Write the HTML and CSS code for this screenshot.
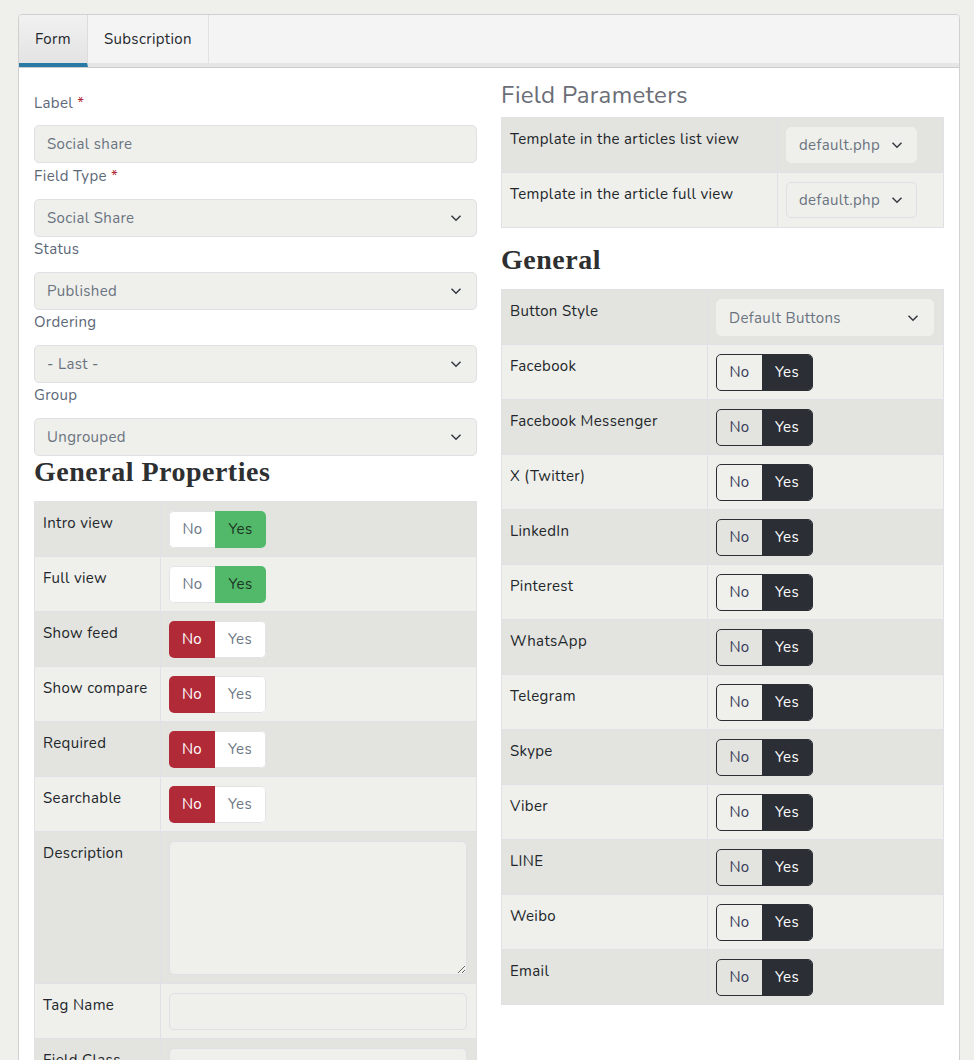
FILE: index.html
```html
<!DOCTYPE html>
<html lang="en">

<head>
  <meta charset="UTF-8">
  <meta name="viewport" content="width=device-width, initial-scale=1.0">
  <title>Edit Field</title>
  <link rel="stylesheet" href="styles.css">
</head>

<body>
  <div class="card">
    <div class="tabs">
      <a class="tab active" href="#form">Form</a>
      <a class="tab" href="#subscription">Subscription</a>
    </div>

    <div class="card-body">
      <!-- left column -->
      <div class="col">
        <div class="form-group">
          <label>Label <span class="star">*</span></label>
          <input class="form-control" type="text" placeholder="Social share">
        </div>
        <div class="form-group">
          <label>Field Type <span class="star">*</span></label>
          <div class="select-wrap">
            <select class="form-control"><option>Social Share</option></select>
            <svg class="chev" viewBox="0 0 16 16"><path d="M2 5l6 6 6-6"/></svg>
          </div>
        </div>
        <div class="form-group">
          <label>Status</label>
          <div class="select-wrap">
            <select class="form-control"><option>Published</option></select>
            <svg class="chev" viewBox="0 0 16 16"><path d="M2 5l6 6 6-6"/></svg>
          </div>
        </div>
        <div class="form-group">
          <label>Ordering</label>
          <div class="select-wrap">
            <select class="form-control"><option>- Last -</option></select>
            <svg class="chev" viewBox="0 0 16 16"><path d="M2 5l6 6 6-6"/></svg>
          </div>
        </div>
        <div class="form-group">
          <label>Group</label>
          <div class="select-wrap">
            <select class="form-control"><option>Ungrouped</option></select>
            <svg class="chev" viewBox="0 0 16 16"><path d="M2 5l6 6 6-6"/></svg>
          </div>
        </div>

        <h3 class="serif-title">General Properties</h3>
        <table class="params params-left">
          <tr>
            <td class="key">Intro view</td>
            <td><div class="switch"><span class="off">No</span><span class="yes-on">Yes</span></div></td>
          </tr>
          <tr>
            <td class="key">Full view</td>
            <td><div class="switch"><span class="off">No</span><span class="yes-on">Yes</span></div></td>
          </tr>
          <tr>
            <td class="key">Show feed</td>
            <td><div class="switch"><span class="no-on">No</span><span class="off">Yes</span></div></td>
          </tr>
          <tr>
            <td class="key">Show compare</td>
            <td><div class="switch"><span class="no-on">No</span><span class="off">Yes</span></div></td>
          </tr>
          <tr>
            <td class="key">Required</td>
            <td><div class="switch"><span class="no-on">No</span><span class="off">Yes</span></div></td>
          </tr>
          <tr>
            <td class="key">Searchable</td>
            <td><div class="switch"><span class="no-on">No</span><span class="off">Yes</span></div></td>
          </tr>
          <tr>
            <td class="key">Description</td>
            <td><textarea class="form-control area"></textarea></td>
          </tr>
          <tr>
            <td class="key">Tag Name</td>
            <td><input class="form-control" type="text"></td>
          </tr>
          <tr>
            <td class="key">Field Class</td>
            <td><input class="form-control" type="text"></td>
          </tr>
        </table>
      </div>

      <!-- right column -->
      <div class="col">
        <h3 class="light-title">Field Parameters</h3>
        <table class="params params-tpl">
          <tr>
            <td class="key">Template in the articles list view</td>
            <td>
              <div class="select-wrap small">
                <select class="form-control flat"><option>default.php</option></select>
                <svg class="chev" viewBox="0 0 16 16"><path d="M2 5l6 6 6-6"/></svg>
              </div>
            </td>
          </tr>
          <tr>
            <td class="key">Template in the article full view</td>
            <td>
              <div class="select-wrap small">
                <select class="form-control"><option>default.php</option></select>
                <svg class="chev" viewBox="0 0 16 16"><path d="M2 5l6 6 6-6"/></svg>
              </div>
            </td>
          </tr>
        </table>

        <h3 class="serif-title general">General</h3>
        <table class="params params-right">
          <tr>
            <td class="key">Button Style</td>
            <td>
              <div class="select-wrap wide">
                <select class="form-control flat"><option>Default Buttons</option></select>
                <svg class="chev" viewBox="0 0 16 16"><path d="M2 5l6 6 6-6"/></svg>
              </div>
            </td>
          </tr>
          <tr><td class="key">Facebook</td><td><div class="switch dark"><span>No</span><span class="on">Yes</span></div></td></tr>
          <tr><td class="key">Facebook Messenger</td><td><div class="switch dark"><span>No</span><span class="on">Yes</span></div></td></tr>
          <tr><td class="key">X (Twitter)</td><td><div class="switch dark"><span>No</span><span class="on">Yes</span></div></td></tr>
          <tr><td class="key">LinkedIn</td><td><div class="switch dark"><span>No</span><span class="on">Yes</span></div></td></tr>
          <tr><td class="key">Pinterest</td><td><div class="switch dark"><span>No</span><span class="on">Yes</span></div></td></tr>
          <tr><td class="key">WhatsApp</td><td><div class="switch dark"><span>No</span><span class="on">Yes</span></div></td></tr>
          <tr><td class="key">Telegram</td><td><div class="switch dark"><span>No</span><span class="on">Yes</span></div></td></tr>
          <tr><td class="key">Skype</td><td><div class="switch dark"><span>No</span><span class="on">Yes</span></div></td></tr>
          <tr><td class="key">Viber</td><td><div class="switch dark"><span>No</span><span class="on">Yes</span></div></td></tr>
          <tr><td class="key">LINE</td><td><div class="switch dark"><span>No</span><span class="on">Yes</span></div></td></tr>
          <tr><td class="key">Weibo</td><td><div class="switch dark"><span>No</span><span class="on">Yes</span></div></td></tr>
          <tr><td class="key">Email</td><td><div class="switch dark"><span>No</span><span class="on">Yes</span></div></td></tr>
        </table>
      </div>
    </div>
  </div>
</body>

</html>
```

FILE: styles.css
```css
* {
  box-sizing: border-box;
}

body {
  margin: 0;
  padding: 14px 14px 0 18px;
  background: #eff0ec;
  font-family: "Nunito", "Lato", "Noto Sans", sans-serif;
  font-size: 15px;
  letter-spacing: 0.35px;
  color: #22262a;
}

.card {
  background: #ffffff;
  border: 1px solid #d0d0d0;
  border-radius: 4px 4px 0 0;
  min-height: 1100px;
}

/* tabs */
.tabs {
  display: flex;
  height: 52px;
  background: #f4f4f4;
  border-bottom: 4px solid #e6e6e6;
  box-shadow: 0 1px 0 #cccccc;
  border-radius: 4px 4px 0 0;
}

.tabs .tab {
  display: block;
  height: 52px;
  margin-bottom: -4px;
  padding: 0 16px;
  line-height: 49px;
  font-size: 15px;
  color: #24282d;
  text-decoration: none;
  border-right: 1px solid #e2e2e2;
  border-bottom: 4px solid transparent;
}

.tabs .tab.active {
  background: linear-gradient(#f1f1f1, #e3e3e3);
  border-right: 1px solid #dcdcdc;
  border-bottom-color: #2a7aa5;
  border-top-left-radius: 4px;
}

.card-body {
  display: grid;
  grid-template-columns: 1fr 1fr;
  column-gap: 24px;
  padding: 14px 15px 0;
}

.col {
  min-width: 0;
}

/* form */
.form-group label {
  display: block;
  line-height: 24px;
  margin-bottom: 11px;
  color: #5c6877;
}

.form-group:first-child {
  padding: 10px 0 1px;
}

.form-group:first-child label {
  margin-bottom: 10px;
}

.star {
  color: #b12a37;
}

.form-control {
  display: block;
  width: 100%;
  height: 38px;
  padding: 0 12px;
  font-family: inherit;
  font-size: 15px;
  letter-spacing: 0.35px;
  color: #6a7380;
  background: #eff0ec;
  border: 1px solid #dde1e4;
  border-radius: 5px;
  outline: none;
  appearance: none;
  -webkit-appearance: none;
}

.form-control::placeholder {
  color: #6a7380;
}

.form-control.flat {
  border-color: #eff0ec;
}

.select-wrap {
  position: relative;
}

.select-wrap .chev {
  position: absolute;
  right: 15px;
  top: 50%;
  width: 12px;
  height: 12px;
  margin-top: -6px;
  fill: none;
  stroke: #343a40;
  stroke-width: 2;
  pointer-events: none;
}

.select-wrap.small {
  width: 131px;
}

.select-wrap.small .form-control {
  height: 36px;
}

.select-wrap.small .chev {
  right: 14px;
}

.select-wrap.wide {
  width: 218px;
}

.select-wrap.wide .form-control {
  height: 37px;
}

/* headings */
.serif-title {
  margin: 0 0 14px;
  font-family: "Liberation Serif", "DejaVu Serif", serif;
  font-size: 28px;
  font-weight: bold;
  line-height: 31px;
  letter-spacing: 0.5px;
  color: #2e2f31;
}

.serif-title.general {
  margin-top: 16px;
}

.light-title {
  margin: 0 0 8px;
  font-size: 24px;
  font-weight: normal;
  line-height: 28px;
  letter-spacing: 0.3px;
  color: #6b6e76;
}

/* parameter tables */
.params {
  width: 100%;
  border-collapse: collapse;
  table-layout: fixed;
}

.params td {
  height: 55px;
  padding: 9px 9px 8px 8px;
  vertical-align: top;
  border: 1px solid #dfe1e4;
  line-height: 24px;
}

.params tr:nth-child(odd) td {
  background: #e3e4e0;
}

.params tr:nth-child(even) td {
  background: #eff0ec;
}

.params-left .key {
  width: 126px;
}

.params-tpl .key {
  width: 276px;
}

.params-right .key {
  width: 206px;
}

.params td .form-control {
  height: 37px;
}

.params td .form-control.area {
  height: 134px;
  padding: 8px 12px;
  resize: vertical;
}

/* switches */
.switch {
  display: inline-flex;
  height: 37px;
  border-radius: 5px;
  overflow: hidden;
  font-size: 15px;
  line-height: 37px;
  background: #ffffff;
}

.switch span {
  display: block;
  text-align: center;
}

.switch span:first-child {
  width: 46px;
}

.switch span:last-child {
  width: 51px;
}

.switch .off {
  color: #6b7684;
  border: 1px solid #e2e3e5;
  line-height: 35px;
}

.switch .off:first-child {
  border-right: 0;
  border-radius: 5px 0 0 5px;
}

.switch .off:last-child {
  border-left: 0;
  border-radius: 0 5px 5px 0;
}

.switch .yes-on {
  background: #52b86a;
  color: #1c3322;
}

.switch .no-on {
  background: #b12a37;
  color: #ffffff;
}

.switch.dark {
  background: transparent;
  border: 1px solid #2b2e35;
  line-height: 35px;
}

.switch.dark span:first-child {
  width: 45px;
  color: #373b57;
}

.switch.dark span:last-child {
  width: 50px;
}

.switch.dark .on {
  background: #2b2e35;
  color: #ffffff;
}
```
